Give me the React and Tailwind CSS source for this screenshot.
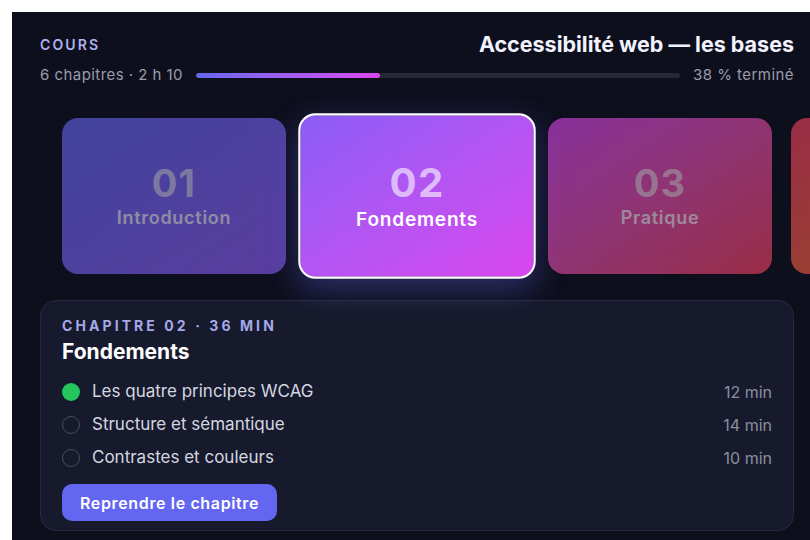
import React from "react";

const chapters = [
  { num: "01", name: "Introduction", bg: "bg-gradient-to-br from-[#6366f1] to-[#8b5cf6]" },
  { num: "02", name: "Fondements", bg: "bg-gradient-to-br from-[#8b5cf6] to-[#d946ef]", active: true },
  { num: "03", name: "Pratique", bg: "bg-gradient-to-br from-[#d946ef] to-[#f43f5e]" },
  { num: "", name: "", bg: "bg-gradient-to-br from-[#f43f5e] to-[#f97316]" },
];

const lessons = [
  { title: "Les quatre principes WCAG", time: "12 min", done: true },
  { title: "Structure et sémantique", time: "14 min" },
  { title: "Contrastes et couleurs", time: "10 min" },
];

// Carte d'un chapitre dans le carrousel
const ChapterCard = ({ chapter }) => (
  <div
    className={`w-[224px] h-[156px] shrink-0 rounded-2xl flex flex-col items-center justify-center gap-[5px] ${chapter.bg}
      ${chapter.active
        ? "scale-[1.06] border-2 border-white shadow-[0_10px_28px_rgba(99,102,241,0.35)]"
        : "opacity-60"}
    `}
  >
    {chapter.num && (
      <>
        <span className="text-[38px] font-bold leading-none tracking-[0.03em] text-white/60">{chapter.num}</span>
        <span className={`text-[18px] font-semibold leading-[22px] tracking-[0.04em] ${chapter.active ? "text-white" : "text-white/80"}`}>
          {chapter.name}
        </span>
      </>
    )}
  </div>
);

export default function App() {
  return (
    <div className="h-screen w-full overflow-hidden bg-white pt-3 pl-3 font-['Inter',sans-serif]">
      <div className="w-[810px] h-[540px] bg-[#0e0f1d] px-[28px] pt-[18px]">
        {/* Header */}
        <div className="flex items-center justify-between h-[28px]">
          <span className="text-[14px] font-semibold tracking-[0.15em] text-[#aeb2f0]">COURS</span>
          <h1 className="text-[21.5px] font-bold text-[#f2f3ff] leading-[28px]">Accessibilité web — les bases</h1>
        </div>

        {/* Progress */}
        <div className="mt-[7px] flex items-center gap-[13px] h-[20px]">
          <span className="text-[15px] tracking-[0.03em] text-[#9a9cab]">6 chapitres · 2 h 10</span>
          <div className="flex-1 h-[5px] rounded-full bg-[#262837] overflow-hidden">
            <div className="h-full rounded-full bg-gradient-to-r from-[#6366f1] to-[#d946ef]" style={{ width: "38%" }} />
          </div>
          <span className="text-[15px] tracking-[0.03em] text-[#9a9cab]">38 % terminé</span>
        </div>

        {/* Carousel */}
        <div className="mt-[33px] flex items-center gap-[19px] pl-[22px]">
          {chapters.map((c, i) => (
            <ChapterCard key={i} chapter={c} />
          ))}
        </div>

        {/* Chapter detail */}
        <div className="mt-[26px] rounded-2xl border border-[#272a3e] bg-[#171a2c] px-[21px] pt-[16px] pb-[9px]">
          <div className="text-[14px] font-bold tracking-[0.22em] text-[#a5a8e8] leading-[18px]">
            CHAPITRE 02 · 36 MIN
          </div>
          <h2 className="mt-[3px] text-[21px] font-bold text-white leading-[28px]">Fondements</h2>

          <ul className="mt-[9px]">
            {lessons.map((l) => (
              <li key={l.title} className="flex items-center h-[33px]">
                {l.done ? (
                  <span className="w-[18px] h-[18px] rounded-full bg-[#22c55e] shrink-0" />
                ) : (
                  <span className="w-[18px] h-[18px] rounded-full border-[1.5px] border-[#4a4c5e] shrink-0" />
                )}
                <span className="ml-[12px] text-[17px] text-[#d4d6e0]">{l.title}</span>
                <span className="ml-auto text-[16px] text-[#8c8ea0]">{l.time}</span>
              </li>
            ))}
          </ul>

          <button className="mt-[10px] h-[37px] px-[18px] rounded-[10px] bg-[#6366f1] text-[16px] font-semibold tracking-[0.04em] text-white">
            Reprendre le chapitre
          </button>
        </div>
      </div>
    </div>
  );
}
